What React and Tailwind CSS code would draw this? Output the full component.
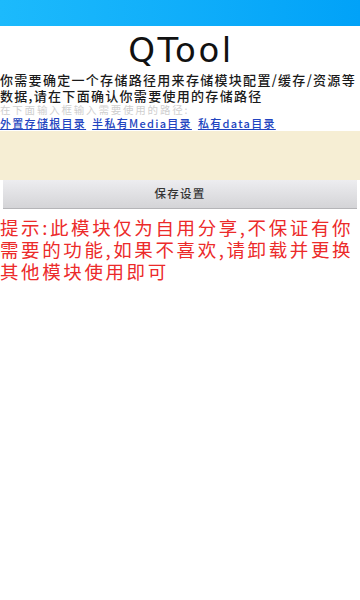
export default function App() {
  return (
    <div className="w-[360px] h-[600px] bg-white overflow-hidden" style={{ fontFamily: '"Noto Sans CJK SC", "Noto Sans", sans-serif' }}>
      <div className="h-[26px] bg-gradient-to-r from-[#1cbafc] to-[#01a2f8]" />
      <div className="h-[46px] flex items-center justify-center pt-[1px]">
        <span className="text-[34px] leading-none text-[#111] tracking-[2.5px] pl-[2px] font-normal" style={{ fontFamily: '"DejaVu Sans", sans-serif' }}>QTool</span>
      </div>
      <div className="text-[13px] leading-[16px] text-[#1a1a1a] tracking-[1.3px] font-medium">
        你需要确定一个存储路径用来存储模块配置/缓存/资源等数据,请在下面确认你需要使用的存储路径
      </div>
      <div className="text-[10.5px] leading-[12px] text-[#cfcfcf] tracking-[1.8px]">在下面输入框输入需要使用的路径:</div>
      <div className="text-[11px] leading-[14px] text-[#2244c0] flex gap-[6px] tracking-[1.3px] font-medium">
        <span className="underline">外置存储根目录</span>
        <span className="underline">半私有Media目录</span>
        <span className="underline">私有data目录</span>
      </div>
      <div className="h-[49px] bg-[#f6eed4] mt-[1px]" />
      <div className="mx-[3px] h-[29px] bg-gradient-to-b from-[#ededf0] to-[#d4d4d7] border-b border-[#b5b5b8] flex items-center justify-center text-[11.5px] tracking-[1.2px] text-[#333] font-medium">
        保存设置
      </div>
      <div className="text-[18.5px] leading-[22px] text-[#ec2a2a] mt-[7px] tracking-[2.6px]">
        提示:此模块仅为自用分享,不保证有你需要的功能,如果不喜欢,请卸载并更换其他模块使用即可
      </div>
    </div>
  );
}
